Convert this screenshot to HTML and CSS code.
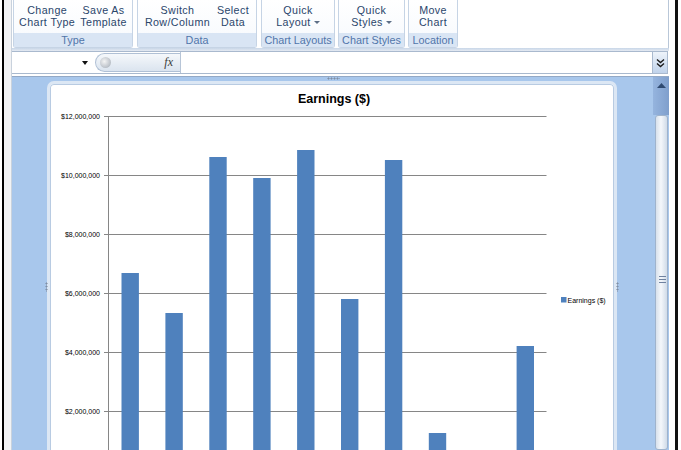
FILE: index.html
```html
<!DOCTYPE html>
<html>
<head>
<meta charset="utf-8">
<link rel="stylesheet" href="styles.css">
</head>
<body>
<div class="window">
  <div class="gutter-left"></div>
  <div class="main">
    <div class="ribbon">
      <div class="group g-type">
        <div class="buttons">
          <div class="btn"><span class="ln">Change</span><span class="ln">Chart Type</span></div>
          <div class="btn"><span class="ln">Save As</span><span class="ln">Template</span></div>
        </div>
        <div class="glabel">Type</div>
      </div>
      <div class="group g-data">
        <div class="buttons">
          <div class="btn"><span class="ln">Switch</span><span class="ln">Row/Column</span></div>
          <div class="btn"><span class="ln">Select</span><span class="ln">Data</span></div>
        </div>
        <div class="glabel">Data</div>
      </div>
      <div class="group g-layouts">
        <div class="buttons">
          <div class="btn"><span class="ln">Quick</span><span class="ln">Layout<span class="caret"></span></span></div>
        </div>
        <div class="glabel">Chart Layouts</div>
      </div>
      <div class="group g-styles">
        <div class="buttons">
          <div class="btn"><span class="ln">Quick</span><span class="ln">Styles<span class="caret"></span></span></div>
        </div>
        <div class="glabel">Chart Styles</div>
      </div>
      <div class="group g-location">
        <div class="buttons">
          <div class="btn"><span class="ln">Move</span><span class="ln">Chart</span></div>
        </div>
        <div class="glabel">Location</div>
      </div>
    </div>
    <div class="ribbon-sep"></div>
    <div class="fbar">
      <div class="namebox"><span class="nb-arrow"></span></div>
      <div class="pill">
        <span class="bubble"></span>
        <span class="fx">fx</span>
      </div>
      <div class="finput"></div>
      <div class="expand">
        <svg width="9" height="10" viewBox="0 0 9 10"><path d="M1 1.5 L4.5 4.5 L8 1.5 M1 5.5 L4.5 8.5 L8 5.5" fill="none" stroke="#1b1b1b" stroke-width="1.4"/></svg>
      </div>
    </div>
    <div class="sheet">
      <div class="canvas">
        <div class="chart">
          <span class="handle h-top"></span>
          <span class="handle h-left"></span>
          <span class="handle h-right"></span>
          <svg class="plot" width="564" height="366" viewBox="0 0 564 366">
            <g transform="translate(-50,-84)">
              <text x="334" y="103" text-anchor="middle" class="title">Earnings ($)</text>
              <g class="grid">
                <line x1="104" y1="116.5" x2="546.5" y2="116.5"/>
                <line x1="104" y1="175.5" x2="546.5" y2="175.5"/>
                <line x1="104" y1="234.5" x2="546.5" y2="234.5"/>
                <line x1="104" y1="293.5" x2="546.5" y2="293.5"/>
                <line x1="104" y1="352.5" x2="546.5" y2="352.5"/>
                <line x1="104" y1="411.5" x2="546.5" y2="411.5"/>
                <line x1="108.5" y1="116" x2="108.5" y2="471"/>
              </g>
              <g class="ylab">
                <text x="100" y="119">$12,000,000</text>
                <text x="100" y="178">$10,000,000</text>
                <text x="100" y="237">$8,000,000</text>
                <text x="100" y="296">$6,000,000</text>
                <text x="100" y="355">$4,000,000</text>
                <text x="100" y="414">$2,000,000</text>
              </g>
              <g class="bars">
                <rect x="121.5" y="273" width="17.4" height="200"/>
                <rect x="165.4" y="313" width="17.4" height="160"/>
                <rect x="209.3" y="157" width="17.4" height="320"/>
                <rect x="253.2" y="178" width="17.4" height="300"/>
                <rect x="297.1" y="150" width="17.4" height="330"/>
                <rect x="341" y="299" width="17.4" height="180"/>
                <rect x="384.9" y="160" width="17.4" height="320"/>
                <rect x="428.8" y="433" width="17.4" height="50"/>
                <rect x="516.6" y="346" width="17.4" height="130"/>
              </g>
              <rect x="561" y="297" width="5.5" height="5.5" fill="#4f81bd"/>
              <text x="567.5" y="302.5" class="legend">Earnings ($)</text>
            </g>
          </svg>
        </div>
      </div>
      <div class="vscroll">
        <div class="sbtn">
          <svg width="9" height="5" viewBox="0 0 9 5"><path d="M0 5 L4.5 0 L9 5 Z" fill="#2f4a70"/></svg>
        </div>
        <div class="thumb"><span class="grip"></span></div>
      </div>
    </div>
  </div>
  <div class="gutter-right"></div>
</div>
</body>
</html>
```

FILE: styles.css
```css
* { box-sizing: border-box; margin: 0; padding: 0; }
html, body {
  width: 681px;
  height: 450px;
  overflow: hidden;
  background: #ffffff;
}
body {
  font-family: "Liberation Sans", Arial, sans-serif;
}
.window {
  display: flex;
  width: 676px;
  height: 450px;
  margin-left: 2px;
  border-left: 2px solid #000;
  border-right: 3px solid #111;
}
.gutter-left {
  width: 8px;
  background: #f2f3f5;
  border-right: 1px solid #c9d2dd;
}
.gutter-right {
  width: 6px;
  background: #ffffff;
}
.main {
  width: 657px;
  display: flex;
  flex-direction: column;
}

/* Ribbon */
.ribbon {
  height: 48px;
  display: flex;
  padding-left: 1px;
  background: #ffffff;
  border-right: 1px solid #b9c7d8;
  width: 657px;
}
.group {
  display: flex;
  flex-direction: column;
  height: 48px;
  background: linear-gradient(#ffffff, #f6f9fd);
  border: 1px solid #c6d4e5;
  border-top: none;
  border-radius: 0 0 3px 3px;
}
.g-type { width: 120px; }
.g-data { width: 120px; margin-left: 4px; }
.g-layouts { width: 74px; margin-left: 4px; }
.g-styles { width: 67px; margin-left: 3px; }
.g-location { width: 50px; margin-left: 3px; }
.buttons {
  flex: 1;
  display: flex;
  justify-content: space-evenly;
  padding-top: 4px;
}
.btn {
  display: flex;
  flex-direction: column;
  align-items: center;
  font-size: 10.7px;
  letter-spacing: 0.4px;
  color: #2a456b;
  white-space: nowrap;
}
.ln {
  display: block;
  height: 12px;
  line-height: 12px;
}
.caret {
  display: inline-block;
  width: 0;
  height: 0;
  margin-left: 3px;
  vertical-align: 2px;
  border-left: 3px solid transparent;
  border-right: 3px solid transparent;
  border-top: 3px solid #5c6e86;
}
.glabel {
  height: 14px;
  background: #d9e5f4;
  color: #5175aa;
  font-size: 10.8px;
  line-height: 14px;
  text-align: center;
  white-space: nowrap;
}
.ribbon-sep {
  height: 3px;
  width: 657px;
  background: linear-gradient(#c8d6e8, #e4eaf2);
}

/* Formula bar */
.fbar {
  display: flex;
  width: 656px;
  height: 23px;
  background: #ffffff;
  border: 1px solid #a9b9ce;
  border-left: none;
}
.namebox {
  width: 83px;
  position: relative;
  background: #ffffff;
}
.nb-arrow {
  position: absolute;
  left: 70px;
  top: 9px;
  width: 0;
  height: 0;
  border-left: 3.5px solid transparent;
  border-right: 3.5px solid transparent;
  border-top: 4px solid #111;
}
.pill {
  width: 85px;
  height: 19px;
  margin-top: 1px;
  display: flex;
  align-items: center;
  border: 1px solid #b0c0d5;
  border-right: none;
  border-radius: 10px 0 0 10px;
  background: linear-gradient(#f5f8fb, #dbe4ef);
}
.bubble {
  width: 11px;
  height: 11px;
  margin-left: 4px;
  border-radius: 50%;
  background: radial-gradient(circle at 40% 40%, #f4f4f4, #b9bfc7 70%, #d7dce3);
}
.fx {
  margin-left: auto;
  margin-right: 7px;
  font-family: "Liberation Serif", serif;
  font-style: italic;
  font-size: 12px;
  color: #3a3a3a;
}
.finput {
  flex: 1;
  border-left: 1px solid #b7c5d7;
}
.expand {
  width: 15px;
  display: flex;
  align-items: center;
  justify-content: center;
  border-left: 1px solid #a9b9ce;
  background: linear-gradient(#eef3fa, #c0d3eb);
}

/* Sheet */
.sheet {
  flex: 1;
  display: flex;
  margin-top: 2px;
  border-top: 1px solid #93a9c6;
  background: #a8c7ec;
  overflow: hidden;
}
.canvas {
  width: 641px;
}
.chart {
  position: relative;
  width: 570px;
  height: 400px;
  margin: 4px 0 0 35px;
  background: #ffffff;
  border: 3px solid #dce7f4;
  border-radius: 7px;
  box-shadow: inset 0 0 0 1px #b8cbe2;
}
.plot {
  display: block;
}
.title {
  font-family: "Liberation Sans", sans-serif;
  font-weight: bold;
  font-size: 12.5px;
  fill: #000;
}
.grid line {
  stroke: #868686;
  stroke-width: 1;
}
.ylab text {
  font-family: "Liberation Sans", sans-serif;
  font-size: 7px;
  fill: #000;
  text-anchor: end;
}
.bars rect {
  fill: #4f81bd;
}
.legend {
  font-family: "Liberation Sans", sans-serif;
  font-size: 7px;
  fill: #000;
}
.handle {
  position: absolute;
  background-image: radial-gradient(circle, #7f8fa5 45%, transparent 50%);
}
.h-top {
  left: 277px;
  top: -7px;
  width: 13px;
  height: 3px;
  background-size: 3px 3px;
}
.h-left {
  left: -5px;
  top: 198px;
  width: 3px;
  height: 10px;
  background-size: 3px 3px;
}
.h-right {
  right: -5px;
  top: 198px;
  width: 3px;
  height: 10px;
  background-size: 3px 3px;
}

/* Scrollbar */
.vscroll {
  width: 16px;
  display: flex;
  flex-direction: column;
}
.sbtn {
  height: 38px;
  display: flex;
  justify-content: center;
  padding-top: 6px;
  background: linear-gradient(90deg, #95b4de, #7f9fcc);
}
.thumb {
  flex: 1;
  position: relative;
  margin-left: 2px;
  margin-right: 1px;
  border: 1px solid #9fb3cc;
  border-radius: 3px;
  background: linear-gradient(90deg, #d8e1ec, #f4f7fb 45%, #d0dbe8);
}
.grip {
  position: absolute;
  left: 3px;
  top: 160px;
  width: 7px;
  height: 7px;
  background: repeating-linear-gradient(#6f82a0 0 1px, transparent 1px 3px);
}
```
